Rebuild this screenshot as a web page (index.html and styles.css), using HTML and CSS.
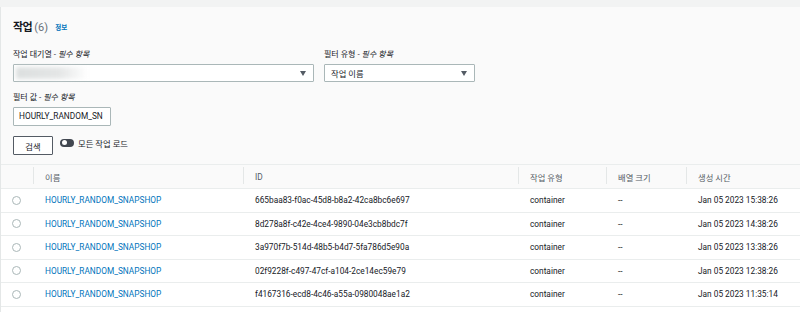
FILE: index.html
```html
<!DOCTYPE html>
<html lang="ko">
<head>
    <meta charset="UTF-8">
    <meta name="viewport" content="width=device-width, initial-scale=1.0">
    <title>작업</title>
    <link rel="stylesheet" href="styles.css">
</head>
<body>

<div class="panel">
    <!-- 제목 -->
    <div class="title">
        <span class="title-main">작업</span>
        <span class="title-count">(6)</span>
        <a class="info" href="#">정보</a>
    </div>

    <!-- 검색 조건 -->
    <div class="form">
        <div class="field-row">
            <div class="field queue">
                <div class="label">작업 대기열 - <em>필수 항목</em></div>
                <div class="select">
                    <span class="blurred"></span>
                    <span class="caret"></span>
                </div>
            </div>
            <div class="field filter-type">
                <div class="label">필터 유형 - <em>필수 항목</em></div>
                <div class="select">
                    <span class="select-text">작업 이름</span>
                    <span class="caret"></span>
                </div>
            </div>
        </div>

        <div class="field value">
            <div class="label">필터 값 - <em>필수 항목</em></div>
            <div class="input">HOURLY_RANDOM_SN</div>
        </div>

        <div class="actions">
            <button class="btn">검색</button>
            <span class="toggle"><span class="knob"></span></span>
            <span class="toggle-label">모든 작업 로드</span>
        </div>
    </div>

    <!-- 작업 목록 -->
    <table class="jobs">
        <thead>
            <tr>
                <th class="col-radio"></th>
                <th class="col-name">이름</th>
                <th class="col-id">ID</th>
                <th class="col-type">작업 유형</th>
                <th class="col-size">배열 크기</th>
                <th class="col-time">생성 시간</th>
            </tr>
        </thead>
        <tbody>
            <tr>
                <td class="col-radio"><span class="radio"></span></td>
                <td><a href="#">HOURLY_RANDOM_SNAPSHOP</a></td>
                <td>665baa83-f0ac-45d8-b8a2-42ca8bc6e697</td>
                <td>container</td>
                <td>--</td>
                <td>Jan 05 2023 15:38:26</td>
            </tr>
            <tr>
                <td class="col-radio"><span class="radio"></span></td>
                <td><a href="#">HOURLY_RANDOM_SNAPSHOP</a></td>
                <td>8d278a8f-c42e-4ce4-9890-04e3cb8bdc7f</td>
                <td>container</td>
                <td>--</td>
                <td>Jan 05 2023 14:38:26</td>
            </tr>
            <tr>
                <td class="col-radio"><span class="radio"></span></td>
                <td><a href="#">HOURLY_RANDOM_SNAPSHOP</a></td>
                <td>3a970f7b-514d-48b5-b4d7-5fa786d5e90a</td>
                <td>container</td>
                <td>--</td>
                <td>Jan 05 2023 13:38:26</td>
            </tr>
            <tr>
                <td class="col-radio"><span class="radio"></span></td>
                <td><a href="#">HOURLY_RANDOM_SNAPSHOP</a></td>
                <td>02f9228f-c497-47cf-a104-2ce14ec59e79</td>
                <td>container</td>
                <td>--</td>
                <td>Jan 05 2023 12:38:26</td>
            </tr>
            <tr>
                <td class="col-radio"><span class="radio"></span></td>
                <td><a href="#">HOURLY_RANDOM_SNAPSHOP</a></td>
                <td>f4167316-ecd8-4c46-a55a-0980048ae1a2</td>
                <td>container</td>
                <td>--</td>
                <td>Jan 05 2023 11:35:14</td>
            </tr>
        </tbody>
    </table>
    <div class="table-rest"></div>
</div>

</body>
</html>
```

FILE: styles.css
```css
body {
    margin: 0;
    background-color: #f2f3f3;
    font-family: Roboto, "Noto Sans CJK KR", sans-serif;
    font-size: 8.3px;
    color: #16191f;
    overflow: hidden;
}
.panel {
    margin-top: 7px;
    background-color: #fafafa;
    border-left: 1px solid #e4e7e7;
}
.title {
    padding: 13px 12px 0;
    height: 16px;
    line-height: 16px;
}
.title-main {
    font-size: 11px;
    font-weight: bold;
    letter-spacing: -0.5px;
}
.title-count {
    font-size: 11px;
    color: #687078;
}
.info {
    margin-left: 5px;
    font-size: 6.5px;
    font-weight: bold;
    color: #0073bb;
    text-decoration: none;
    vertical-align: 1px;
}
.form {
    padding: 14px 12px 0;
}
.field-row {
    display: flex;
    gap: 10px;
}
.queue {
    width: 301px;
}
.filter-type {
    width: 151px;
}
.label {
    line-height: 10px;
    margin-bottom: 4px;
    font-size: 8px;
}
.label em {
    font-style: italic;
}
.select {
    box-sizing: border-box;
    height: 18px;
    background-color: #fff;
    border: 1px solid #aab7b8;
    border-radius: 1px;
    display: flex;
    align-items: center;
    padding: 0 6px;
}
.select-text {
    flex: 1;
}
.blurred {
    flex: 1;
    height: 12px;
    margin-left: -4px;
    max-width: 72px;
    background: linear-gradient(90deg, #dcdfdf 0%, #e4e6e6 60%, rgba(255, 255, 255, 0) 100%);
    filter: blur(2px);
}
.queue .blurred + .caret {
    margin-left: auto;
}
.caret {
    width: 0;
    height: 0;
    border-left: 3.5px solid transparent;
    border-right: 3.5px solid transparent;
    border-top: 5px solid #545b64;
    margin-right: 1px;
}
.value {
    margin-top: 11px;
}
.input {
    box-sizing: border-box;
    width: 98px;
    height: 19px;
    line-height: 17px;
    background-color: #fff;
    border: 1px solid #aab7b8;
    border-radius: 1px;
    padding: 0 5px;
    white-space: nowrap;
    overflow: hidden;
}
.actions {
    margin-top: 10px;
    display: flex;
    align-items: center;
    height: 19px;
}
.btn {
    box-sizing: border-box;
    width: 40px;
    height: 19px;
    padding: 0;
    background-color: #fff;
    border: 1px solid #545b64;
    border-radius: 1px;
    font-family: inherit;
    font-size: 8.3px;
    color: #16191f;
    align-self: flex-end;
}
.toggle {
    position: relative;
    width: 14px;
    height: 8px;
    border-radius: 4px;
    background-color: #414750;
    margin-left: 7px;
    margin-top: -6px;
}
.knob {
    position: absolute;
    top: 1.5px;
    left: 1.5px;
    width: 5px;
    height: 5px;
    border-radius: 50%;
    background-color: #fff;
}
.toggle-label {
    margin-left: 4px;
    margin-top: -6px;
}
.jobs {
    margin-top: 9px;
    width: 100%;
    border-collapse: collapse;
    table-layout: fixed;
    border-top: 1px solid #eaeded;
}
.jobs th,
.jobs td {
    box-sizing: border-box;
    padding: 0 12px;
    text-align: left;
    border-bottom: 1px solid #eaeded;
    white-space: nowrap;
}
.jobs th {
    position: relative;
    height: 24px;
    font-weight: normal;
    color: #545b64;
    background-color: #fafafa;
}
.jobs th + th::before {
    content: "";
    position: absolute;
    left: 0;
    top: 2px;
    bottom: 4px;
    border-left: 1px solid #e4e7e7;
}
.jobs td {
    height: 23.5px;
    background-color: #fff;
}
.jobs a {
    color: #0073bb;
    text-decoration: none;
}
.col-radio {
    width: 32px;
}
.jobs td.col-radio {
    padding: 0 0 0 11px;
}
.col-name {
    width: 210px;
}
.col-id {
    width: 275px;
}
.col-type {
    width: 88px;
}
.col-size {
    width: 80px;
}
.radio {
    display: block;
    box-sizing: border-box;
    width: 9px;
    height: 9px;
    border: 1px solid #aab7b8;
    border-radius: 50%;
    background-color: #fff;
}
.table-rest {
    height: 40px;
    background-color: #fff;
}
```
